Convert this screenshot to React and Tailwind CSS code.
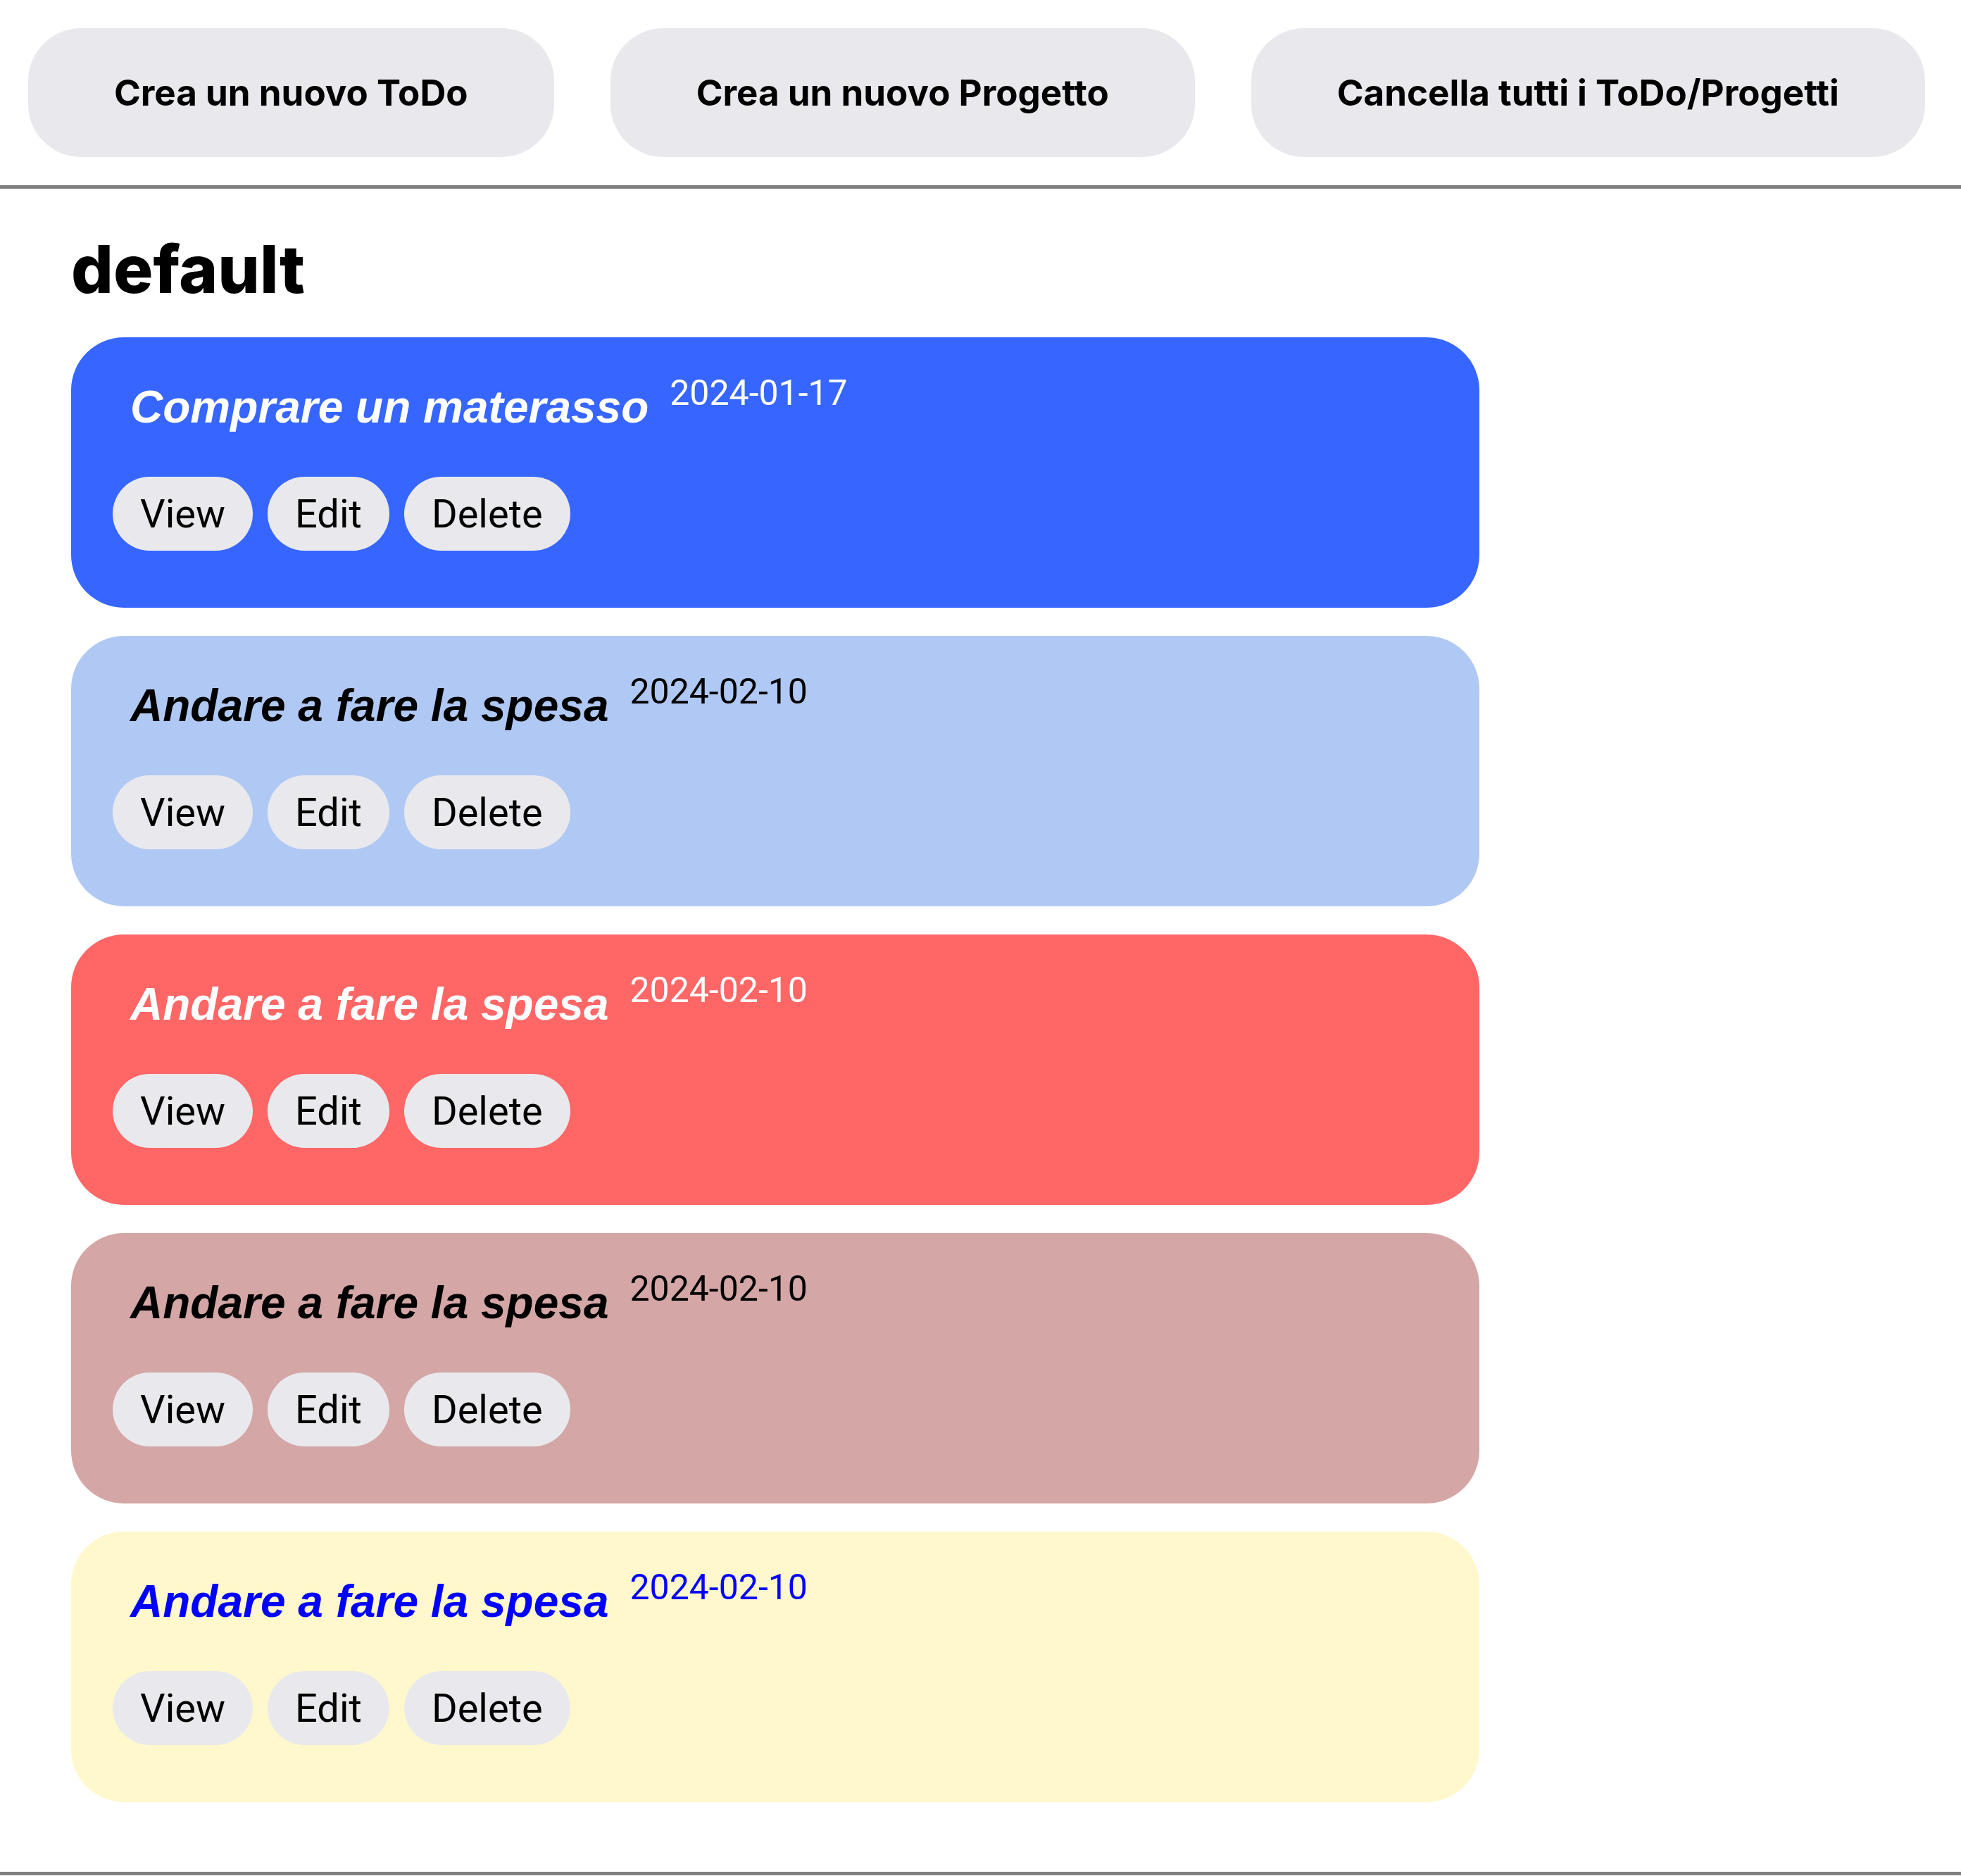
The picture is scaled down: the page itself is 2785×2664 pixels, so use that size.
import React from 'react';

const todos = [
  { id: 1, title: 'Comprare un materasso', date: '2024-01-17', bg: 'bg-[#3666ff]', text: 'text-white' },
  { id: 2, title: 'Andare a fare la spesa', date: '2024-02-10', bg: 'bg-[#b0c9f4]', text: 'text-black' },
  { id: 3, title: 'Andare a fare la spesa', date: '2024-02-10', bg: 'bg-[#ff6666]', text: 'text-white' },
  { id: 4, title: 'Andare a fare la spesa', date: '2024-02-10', bg: 'bg-[#d4a6a6]', text: 'text-black' },
  { id: 5, title: 'Andare a fare la spesa', date: '2024-02-10', bg: 'bg-[#fff8cc]', text: 'text-[#0000ff]' },
];

const topActions = ['Crea un nuovo ToDo', 'Crea un nuovo Progetto', 'Cancella tutti i ToDo/Progetti'];

export default function App() {
  return (
    <div className="min-h-screen bg-white font-['Roboto',sans-serif] text-black">
      <header className="flex gap-[80px] px-[40px] pt-[40px] pb-[40px]">
        {topActions.map(label => (
          <button key={label}
            className="h-[183px] px-[122px] rounded-[75px] bg-[#e9e9ed] font-['Inter',sans-serif] text-[51.1px] font-bold leading-none whitespace-nowrap">
            {label}
          </button>
        ))}
      </header>
      <hr className="border-0 h-[5px] bg-[#808080]" />

      <main className="px-[101px] pt-[67px] pb-[99px] w-[2202px]">
        <h1 className="font-['Inter',sans-serif] text-[94px] font-extrabold leading-none">default</h1>
        <div className="flex flex-col gap-[40px] mt-[50px]">
          {todos.map(todo => <TodoCard key={todo.id} todo={todo} />)}
        </div>
      </main>
      <hr className="border-0 h-[5px] bg-[#808080]" />
    </div>
  );
}

function TodoCard({ todo }) {
  return (
    <div className={`${todo.bg} ${todo.text} rounded-[75px] pl-[59px] pt-[54px] pb-[81px]`}>
      <div className="flex items-start">
        <h2 className="ml-[25px] mt-[13px] text-[64px] font-bold italic leading-none font-['Liberation_Sans',Arial,sans-serif]">
          {todo.title}
        </h2>
        <span className="ml-[30px] text-[50px] leading-none">{todo.date}</span>
      </div>
      <div className="flex gap-[21px] mt-[67px]">
        {['View', 'Edit', 'Delete'].map(label => (
          <button key={label}
            className="h-[105px] px-[39px] rounded-full bg-[#e9e9ed] text-black text-[56px] leading-none">
            {label}
          </button>
        ))}
      </div>
    </div>
  );
}
